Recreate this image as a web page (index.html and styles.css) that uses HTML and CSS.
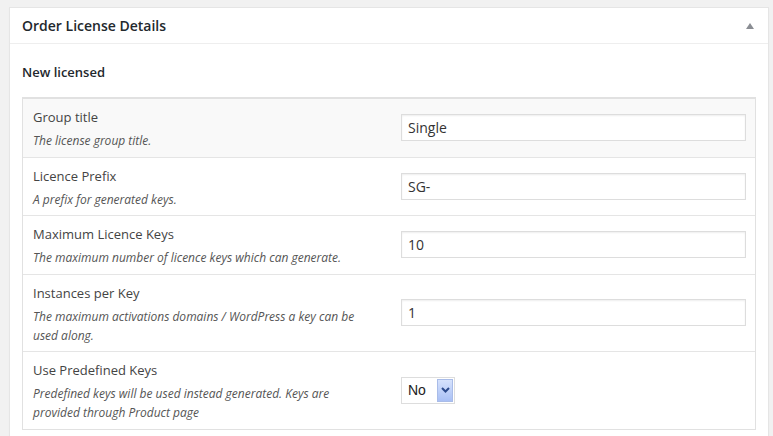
FILE: index.html
```html
<!DOCTYPE html>
<html>
<head>
<meta charset="utf-8">
<link rel="stylesheet" href="styles.css">
</head>
<body>
<div class="postbox">
  <div class="postbox-header">
    <h2 class="postbox-title">Order License Details</h2>
    <span class="toggle"></span>
  </div>
  <div class="inside">
    <h3 class="section-title">New licensed</h3>
    <div class="form-table">
      <div class="row alt">
        <div class="label-cell">
          <div class="label">Group title</div>
          <div class="desc">The license group title.</div>
        </div>
        <div class="field-cell"><div class="input">Single</div></div>
      </div>
      <div class="row">
        <div class="label-cell">
          <div class="label">Licence Prefix</div>
          <div class="desc">A prefix for generated keys.</div>
        </div>
        <div class="field-cell"><div class="input">SG-</div></div>
      </div>
      <div class="row">
        <div class="label-cell">
          <div class="label">Maximum Licence Keys</div>
          <div class="desc">The maximum number of licence keys which can generate.</div>
        </div>
        <div class="field-cell"><div class="input">10</div></div>
      </div>
      <div class="row">
        <div class="label-cell">
          <div class="label">Instances per Key</div>
          <div class="desc">The maximum activations domains / WordPress a key can be used along.</div>
        </div>
        <div class="field-cell"><div class="input">1</div></div>
      </div>
      <div class="row">
        <div class="label-cell">
          <div class="label">Use Predefined Keys</div>
          <div class="desc">Predefined keys will be used instead generated. Keys are provided through Product page</div>
        </div>
        <div class="field-cell">
          <div class="select">
            <span class="select-value">No</span>
            <span class="select-btn">
              <svg width="9" height="6" viewBox="0 0 9 6"><path d="M1 1 L4.5 4.5 L8 1" fill="none" stroke="#2c4a8c" stroke-width="2"/></svg>
            </span>
          </div>
        </div>
      </div>
    </div>
  </div>
</div>
</body>
</html>
```
FILE: styles.css
```css
html, body {
  margin: 0;
  padding: 0;
}
body {
  background: #f1f1f1;
  font-family: "Open Sans", "Noto Sans", sans-serif;
  color: #444;
  height: 436px;
  overflow: hidden;
}
.postbox {
  margin: 7px 4px 0 9px;
  background: #fff;
  border: 1px solid #e5e5e5;
  box-shadow: 0 1px 1px rgba(0,0,0,0.04);
  height: 600px;
}
.postbox-header {
  height: 35px;
  border-bottom: 1px solid #eee;
  display: flex;
  align-items: center;
  justify-content: space-between;
  padding: 0 14px 0 12px;
}
.postbox-title {
  margin: 0;
  font-size: 14px;
  font-weight: 600;
  color: #23282d;
  line-height: 1.4;
}
.toggle {
  width: 0;
  height: 0;
  border-left: 4px solid transparent;
  border-right: 4px solid transparent;
  border-bottom: 6px solid #8a8d93;
  margin-top: 1px;
}
.inside {
  padding: 0 12px;
}
.section-title {
  margin: 0;
  padding: 18px 0 15px;
  font-size: 13px;
  font-weight: 600;
  color: #23282d;
  line-height: 20px;
}
.form-table {
  border: 1px solid #e1e1e1;
  border-top: 2px solid #e1e1e1;
}
.row {
  display: flex;
  align-items: center;
  border-top: 1px solid #e5e5e5;
}
.row:first-child {
  border-top: 0;
}
.row.alt {
  background: #f9f9f9;
}
.label-cell {
  width: 367px;
  box-sizing: border-box;
  padding: 8px 12px 6.5px 10px;
  flex: none;
}
.label {
  font-size: 13px;
  line-height: 20px;
  color: #444;
}
.desc {
  margin-top: 4px;
  font-size: 12px;
  font-style: italic;
  line-height: 19px;
  color: #555;
}
.field-cell {
  flex: 1;
  padding: 0 9px 0 11px;
}
.input {
  height: 27px;
  box-sizing: border-box;
  border: 1px solid #ddd;
  box-shadow: inset 0 1px 2px rgba(0,0,0,0.07);
  background: #fff;
  padding: 0 6px;
  font-size: 14px;
  line-height: 25px;
  color: #333;
}
.select {
  width: 54px;
  height: 27px;
  box-sizing: border-box;
  border: 1px solid #ddd;
  background: #fff;
  display: flex;
  align-items: stretch;
  padding: 1px 1px 1px 0;
}
.select-value {
  flex: 1;
  font-family: "Liberation Sans", Arial, sans-serif;
  font-size: 14px;
  line-height: 23px;
  padding-left: 6px;
  color: #222;
}
.select-btn {
  width: 16px;
  background: linear-gradient(#d6e2fc, #a9c0f5);
  border: 1px solid #a9bce8;
  box-sizing: border-box;
  display: flex;
  align-items: center;
  justify-content: center;
}
```
